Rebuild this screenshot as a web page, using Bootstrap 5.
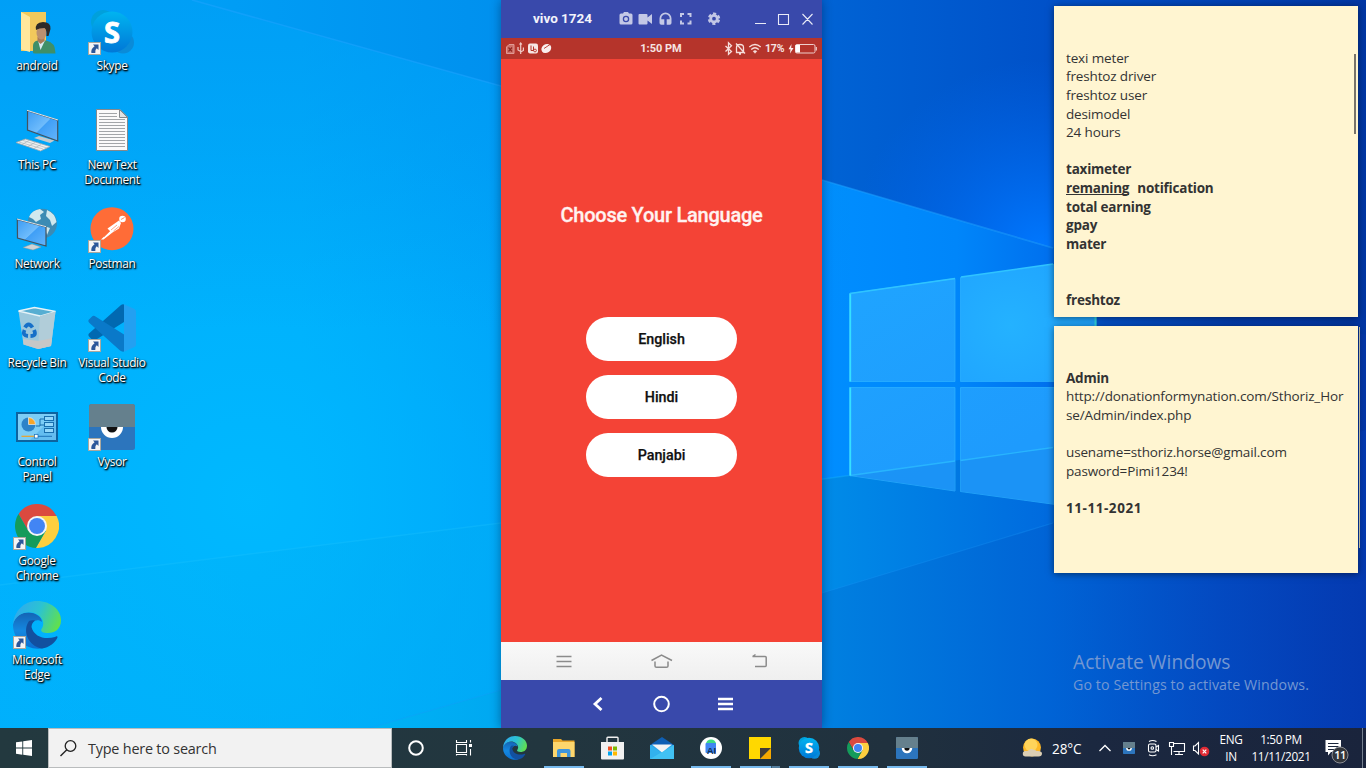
<!DOCTYPE html>
<html lang="en">
<head>
<meta charset="utf-8">
<meta name="viewport" content="width=device-width, initial-scale=1">
<title>Desktop</title>
<link href="https://cdn.jsdelivr.net/npm/bootstrap@5.3.0/dist/css/bootstrap.min.css" rel="stylesheet">
<style>
  body { font-family: "Open Sans", "Noto Sans", sans-serif; background: #0064d8; }
  svg { display: block; flex: none; }
  .wallpaper { inset: 0; z-index: 0; }
  .desk-col { width: 75px; }
  .desk-icon { height: 99px; width: 75px; }
  .desk-icon span { font-size: 11.9px; line-height: 15px; letter-spacing: -.3px; margin-left: -1px; color: #fff; text-align: center; white-space: nowrap;
    text-shadow: 1px 1px 2px #000, 0 1px 2px rgba(0,0,0,.8), 1px 1px 1px rgba(0,0,0,.7); }
  .phone { left: 501px; top: 0; width: 321px; height: 728px; z-index: 2; font-family: Roboto, sans-serif; box-shadow: 0 0 10px rgba(0,20,60,.45); }
  .phone-title { height: 38px; background: #3949ab; }
  .phone-name { width: 117px; padding-left: 32px; font-size: 13.5px; font-weight: 700; color: #f3f4fb; line-height: 37px; }
  .phone-status { height: 21px; background: #b5342b; color: #f7e4e2; font-size: 11px; font-weight: 700; line-height: 22px; }
  .clock-text { width: 42px; }
  .battery-text { width: 21px; font-size: 10.5px; letter-spacing: -.2px; }
  .phone-app { height: 583px; background: #f44336; padding-top: 140px; }
  .app-heading { font-size: 20px; font-weight: 500; line-height: 32px; letter-spacing: -.25px; margin-bottom: 85.500px; color: #fff2f0; -webkit-text-stroke: .3px #fff2f0; }
  .lang-list { gap: 14px; }
  .lang-btn { width: 151px; height: 44px; background: #fff; border-radius: 22px; color: #111; font-size: 14.3px; font-weight: 500; line-height: 44px; padding: 0; border: 0; -webkit-text-stroke: .25px #111; }
  .phone-keys { height: 38px; background: linear-gradient(#f9f9f9, #efefef); }
  .phone-nav { height: 48px; background: #3949ab; }
  .sticky { left: 1054px; width: 304px; background: #fff5d1; z-index: 2; color: #333; font-size: 13.5px; line-height: 18.6px; letter-spacing: -.14px; box-shadow: 0 1px 7px rgba(0,0,0,.5); white-space: pre; }
  .sticky b { letter-spacing: -.22px; }
  .sticky .note-date { letter-spacing: .55px; }
  .note-line { height: 18.6px; }
  .note-mark { height: 16.500px; border-bottom: 1px solid #333; }
  .sticky-a { top: 6px; height: 311px; padding: 42.800px 12px 0; }
  .sticky-b { top: 326px; height: 247px; padding: 42.600px 12px 0; }
  .sticky-scroll { right: 2px; top: 48px; width: 2px; height: 80px; background: #77736a; }
  .sticky-edge { right: -2px; top: 1px; width: 1px; height: 221px; background: #b9b69c; }
  .watermark { left: 1073px; top: 649px; color: #7397d2; z-index: 1; white-space: nowrap; }
  .watermark-title { font-size: 19.2px; line-height: 26px; }
  .watermark-sub { font-size: 14.2px; line-height: 20px; letter-spacing: .1px; }
  .taskbar { height: 40px; z-index: 3; background: linear-gradient(90deg, #23393f 0, #22363f 40%, #20313e 65%, #1b2840 80%, #1a243c 100%); color: #fff; }
  .start-cell { width: 48px; }
  .search-cell { width: 344px; background: #f2f2f2; border: 1px solid #b9bcbd; color: #333; font-size: 14.4px; letter-spacing: -.2px; padding-top: 1px; }
  .temp-text { width: 38px; font-size: 13.6px; line-height: 41px; letter-spacing: -.1px; }
  .tray-text { font-size: 11.8px; line-height: 17px; letter-spacing: -.34px; text-align: center; white-space: nowrap; padding-top: 3px; }
  .tray-lang { width: 34px; }
  .tray-clock { width: 66px; }
</style>
</head>
<body class="vh-100 overflow-hidden d-flex flex-column position-relative">

<svg width="0" height="0" class="position-absolute">
  <defs>
    <linearGradient id="gSky" x1="0" y1="0" x2="0" y2="1"><stop offset="0" stop-color="#00b4f0"/><stop offset="1" stop-color="#0078d7"/></linearGradient>
    <linearGradient id="gEdgeTop" x1="0" y1=".3" x2="1" y2=".6"><stop offset="0" stop-color="#2fa9f0"/><stop offset=".5" stop-color="#2bc3d2"/><stop offset="1" stop-color="#62e04c"/></linearGradient>
    <linearGradient id="gEdgeMid" x1="0" y1="0" x2="0" y2="1"><stop offset="0" stop-color="#1464b4"/><stop offset=".5" stop-color="#1488e0"/><stop offset="1" stop-color="#0c6fd0"/></linearGradient>
    <linearGradient id="gScreen" x1="0" y1="0" x2="1" y2="1"><stop offset="0" stop-color="#3a9bf4"/><stop offset=".5" stop-color="#6fbcfc"/><stop offset=".52" stop-color="#3f9ff6"/><stop offset="1" stop-color="#64b5fb"/></linearGradient>
    <symbol id="shortcut" viewBox="0 0 13 13">
      <rect x=".5" y=".5" width="12" height="12" fill="#f5f5f5" stroke="#aaa89f"/>
      <path d="M5 2.5h5.5V8L8.8 6.3Q6.5 8 7.3 11H3.4Q2.6 7 6.6 4.2Z" fill="#2b579a"/>
    </symbol>
    <symbol id="skype" viewBox="-24 -24 48 48">
      <circle cx="-9" cy="-10" r="12" fill="#00a0dc"/><circle cx="11" cy="10.500" r="11" fill="#0a8bd8"/>
      <circle r="20.5" fill="url(#gSky)"/>
      <text x="0" y="10.500" text-anchor="middle" font-family="Open Sans" font-weight="700" font-size="29" fill="#fff" stroke="#fff" stroke-width=".8">S</text>
    </symbol>
    <symbol id="chrome" viewBox="-22 -22 44 44">
      <path fill="#db4a3f" d="M-18.46-11.97A22 22 0 0 1 19.6-10L0-10-8.66 5Z"/>
      <path fill="#fdcf3f" d="M19.6-10A22 22 0 0 1-1.14 21.97L8.66 5 0-10Z"/>
      <path fill="#149b5b" d="M-1.14 21.97A22 22 0 0 1-18.46-11.97L-8.66 5 8.66 5Z"/>
      <circle r="10" fill="#f4f5f8"/><circle r="8" fill="#4285f4"/>
    </symbol>
    <symbol id="edge" viewBox="-24 -24 48 48">
      <path fill="url(#gEdgeMid)" d="M-24 0C-23-8-16-12.500-9-12.500-1-12.500 5-8 5-3 0-7-5-3-6 1-7 10 0 18 6 23.200-10 26-24 15-24 0Z"/>
      <path fill="#1250a0" d="M-8-4C-15 6-9 21 5 23.500 12 22.500 18 18 20.300 13 21 11 19.500 11 18 12 8 15-3 12-5.500 2-5.500-1-4-3-2-4.500-4-5-6-5-8-4Z"/>
      <path fill="url(#gEdgeTop)" d="M-23.800-1C-23-14-13-24 0-24 14-24 24-15 24-5 24 4 18 8 11 8 6 8 3 6.500 4.500 4 8-1 6-6 2-9.500-6-16-21-13-23.800-1Z"/>
    </symbol>
    <symbol id="vysor" viewBox="0 0 46 46">
      <rect width="46" height="46" rx="2.500" fill="#2c75bd"/>
      <path d="M0 23V2.500Q0 0 2.500 0h41Q46 0 46 2.500V23Z" fill="#65808d"/>
      <path d="M12 23a11 11 0 0 0 22 0Z" fill="#fff"/><path d="M17.500 23a5.500 5.500 0 0 0 11 0Z" fill="#111"/>
    </symbol>
  </defs>
</svg>

<!-- Wallpaper -->
<svg class="wallpaper position-absolute" width="1366" height="768" viewBox="0 0 1366 768">
  <defs>
    <linearGradient id="wBase" gradientUnits="userSpaceOnUse" x1="0" y1="0" x2="1366" y2="0">
      <stop offset="0" stop-color="#00aefd"/><stop offset=".22" stop-color="#00aefb"/><stop offset=".366" stop-color="#00a2f8"/>
      <stop offset=".6" stop-color="#008eff"/><stop offset=".7" stop-color="#0086fa"/><stop offset=".77" stop-color="#0070ee"/><stop offset=".81" stop-color="#0452cc"/><stop offset=".9" stop-color="#043eb2"/><stop offset="1" stop-color="#0436a8"/>
    </linearGradient>
    <radialGradient id="wCyan" gradientUnits="userSpaceOnUse" cx="250" cy="500" r="420"><stop offset="0" stop-color="#00baff" stop-opacity=".9"/><stop offset="1" stop-color="#00b4ff" stop-opacity="0"/></radialGradient>
    <linearGradient id="wTop" gradientUnits="userSpaceOnUse" x1="192" y1="0" x2="1366" y2="0">
      <stop offset="0" stop-color="#009ff6"/><stop offset=".27" stop-color="#0090ee"/><stop offset=".55" stop-color="#0062d4"/><stop offset=".74" stop-color="#0050c8"/><stop offset="1" stop-color="#0036a4"/>
    </linearGradient>
    <linearGradient id="wLeftTop" x1="0" y1="0" x2="0" y2="1"><stop offset="0" stop-color="#0090f0" stop-opacity=".5"/><stop offset="1" stop-color="#0090ee" stop-opacity="0"/></linearGradient>
    <radialGradient id="wGlow" gradientUnits="userSpaceOnUse" cx="1040" cy="250" r="190"><stop offset="0" stop-color="#0078ff"/><stop offset="1" stop-color="#0068f0" stop-opacity="0"/></radialGradient>
    <linearGradient id="wLow" gradientUnits="userSpaceOnUse" x1="0" y1="0" x2="1366" y2="0">
      <stop offset="0" stop-color="#00b4f6" stop-opacity=".15"/><stop offset=".36" stop-color="#00acf4" stop-opacity=".5"/><stop offset=".6" stop-color="#008ce8"/><stop offset=".77" stop-color="#006ade"/><stop offset=".9" stop-color="#0348c2" stop-opacity=".8"/><stop offset="1" stop-color="#0438b0" stop-opacity="0"/>
    </linearGradient>
    <linearGradient id="wFoot" gradientUnits="userSpaceOnUse" x1="380" y1="0" x2="1366" y2="0">
      <stop offset="0" stop-color="#00b2f4"/><stop offset=".12" stop-color="#00a8f0"/><stop offset=".45" stop-color="#007edf"/><stop offset=".68" stop-color="#0062d4"/><stop offset=".84" stop-color="#034bc2"/><stop offset="1" stop-color="#043ab2"/>
    </linearGradient>
    <radialGradient id="wPaneGlow" gradientUnits="userSpaceOnUse" cx="1010" cy="325" r="110"><stop offset="0" stop-color="#24b2ff"/><stop offset="1" stop-color="#1ea0ff"/></radialGradient>
    <linearGradient id="wPane" gradientUnits="userSpaceOnUse" x1="850" y1="290" x2="960" y2="480"><stop offset="0" stop-color="#1fa4ff"/><stop offset="1" stop-color="#1e9bfd"/></linearGradient>
  </defs>
  <rect width="1366" height="768" fill="url(#wBase)"/>
  <rect width="1366" height="768" fill="url(#wCyan)"/>
  <rect width="850" height="330" fill="url(#wLeftTop)"/>
  <path d="M192 0 501 86 822 180 1053 248 1366 335V0Z" fill="url(#wTop)"/>
  <path d="M822 0H1366V345L1053 248 822 180Z" fill="url(#wGlow)"/>
  <path d="M0 585 501 523 849 475.500 1366 403V768H0Z" fill="url(#wLow)"/>
  <path d="M370 728 501 690 865 580 1053 523 1366 430V768H370Z" fill="url(#wFoot)" opacity=".85"/>
  <path d="M192 0 501 86 822 180 1053 248" fill="none" stroke="#20a4ff" stroke-width="1.600" opacity=".5"/>
  <path d="M0 585 501 523 849 475.500" fill="none" stroke="#20c4ff" stroke-width="1.500" opacity=".28"/>
  <path d="M370 728 501 690 865 580 1053 523" fill="none" stroke="#1a98f8" stroke-width="1.300" opacity=".3"/>
  <path d="M849.500 293.500 955 278.500V381.500H849.500ZM849.500 387.500H955V491L849.500 475.500ZM960.500 387.500H1096V510L960.500 491.500Z" fill="url(#wPane)" stroke="#2fb4ff" stroke-opacity=".7"/>
  <path d="M960.500 277.500 1096 258.500V381.500H960.500Z" fill="url(#wPaneGlow)" stroke="#2fb4ff" stroke-opacity=".7"/>
  <path d="M850 475.500 955 461V491ZM960.500 460.500 1053 447.500 1096 442V510L960.500 491.500Z" fill="#1a90f2" opacity=".7"/>
  <path d="M850 475.500 955 461M960.500 460.500 1053 447.500" stroke="#2cbcff" stroke-width="1.300" fill="none" opacity=".8"/>
  <path d="M850.300 381.500V293.500M850.300 387.500V475.500" stroke="#35e0ff" stroke-width="1.700" fill="none"/>
  <path d="M850 293.500 955 278.500M961 277 1053 264" stroke="#2fc4ff" stroke-width="1.400" fill="none"/>
  <path d="M1095.500 317v10" stroke="#30d8e0" stroke-width="2"/>
</svg>

<!-- Desktop shortcuts -->
<main class="flex-grow-1 d-flex position-relative overflow-hidden">
  <div class="desk-col d-flex flex-column">
    <div class="desk-icon d-flex flex-column align-items-center">
      <svg width="75" height="58" viewBox="0 0 75 58">
        <path d="M21 12H46V51H21Z" fill="#f2c95c"/><path d="M21 12 30 17V52L21 49.500Z" fill="#ffe79c"/>
        <path d="M33 52.500V46Q33 41 38 40.500H46Q55.500 42 55.500 53.500H35Q33 53.500 33 52.500Z" fill="#3f8f68"/><path d="M38 40.500 40.500 50 45 40.500Z" fill="#d7eaf0"/>
        <path d="M37.500 37H44.500V41L40.500 44 37.500 41Z" fill="#a87a58"/><ellipse cx="41.500" cy="33" rx="5" ry="6.500" fill="#ba9070"/>
        <path d="M36 30Q34.500 22.500 43 22 51 22 50.500 29L48.500 36H46.500Q47 30 44.500 28 39 28 36 30Z" fill="#2e2a28"/>
      </svg><span>android</span></div>
    <div class="desk-icon d-flex flex-column align-items-center">
      <svg width="75" height="58" viewBox="0 99 75 58">
        <path d="M34 138 39 136 54.500 140.500 50 143Z" fill="#c5cacd"/>
        <path d="M27.500 110.800 57.700 120.300V141L27.500 130Z" fill="url(#gScreen)" stroke="#44525e" stroke-width="1.200"/>
        <path d="M27 110.300 58 120" stroke="#dfe6ea" stroke-width="1"/>
        <path d="M16 142.500 25.500 139 50 146.500 40.500 151Z" fill="#eef0f1" stroke="#a0a8ad" stroke-width=".8"/>
        <path d="M19 142 43 149M23 140.500 47 148M22 144.500 29 140.500M28 146.500 35 142.500M34 148.500 41 144.500" stroke="#a5adb2" stroke-width=".6"/>
      </svg><span>This PC</span></div>
    <div class="desk-icon d-flex flex-column align-items-center">
      <svg width="75" height="58" viewBox="0 198 75 58">
        <circle cx="42.300" cy="223.500" r="14.700" fill="#3c8bb4"/>
        <path d="M29 217Q32 210 40 209L44 212 40 215 41 219 36 222 33 219ZM47 210Q55 213 56.500 222L52 226 50 220 46 216ZM44 226 50 228 47 235Z" fill="#cfe8ee"/>
        <path d="M23 247.500 32 244 41 247 33 250Z" fill="#cdd3d6" stroke="#8c969b" stroke-width=".5"/>
        <path d="M17.300 219.300 46 227V246L17.500 238Z" fill="url(#gScreen)" stroke="#44525e" stroke-width="1.200"/><path d="M17 219 46 226.700" stroke="#dfe6ea"/>
      </svg><span>Network</span></div>
    <div class="desk-icon d-flex flex-column align-items-center">
      <svg width="75" height="58" viewBox="0 297 75 58">
        <path d="M18.500 311 34.500 307.500 55.500 311.500 51 346 38 349 23.500 344.500Z" fill="#9cc8dc"/>
        <path d="M18.500 311 34.500 307.500 55.500 311.500 40 316Z" fill="#57aed2" stroke="#e5f3f8" stroke-width="1.300"/>
        <path d="M40 316 55.500 311.500 51 346 38 349Z" fill="#b1cdd9"/><path d="M23 339 39 341 52 338 51 346 38 349 23.500 344.500Z" fill="#c6c7c7"/>
        <g fill="none" stroke="#1670c8" stroke-width="3.800"><path d="M25 327.500Q28.500 321.500 32.500 327.500"/><path d="M34 330Q37 336 30.500 336"/><path d="M28 336Q22 335.500 24.500 330"/></g>
      </svg><span>Recycle Bin</span></div>
    <div class="desk-icon d-flex flex-column align-items-center">
      <svg width="75" height="58" viewBox="0 396 75 58">
        <rect x="17" y="413" width="40" height="28" fill="#7ccdf6" stroke="#0d639f" stroke-width="2"/><path d="M56 414V440H30Z" fill="#63bdf0"/>
        <circle cx="28.500" cy="424.500" r="7" fill="#2c83c8"/><path d="M28.500 417.500A7 7 0 0 1 35.500 424.500H28.500Z" fill="#f7a62a" stroke="#fff" stroke-width=".6"/>
        <path d="M36 426H40V419H44M40 425H44" stroke="#196fae" fill="none"/>
        <g fill="#93d8fb" stroke="#196fae"><rect x="44.500" y="416.500" width="9" height="4"/><rect x="44.500" y="422.500" width="9" height="4"/><rect x="44.500" y="428.500" width="9" height="4"/></g>
        <path d="M21.500 436.300H36" stroke="#eda128" stroke-width="1.200"/><path d="M36 436.300H52" stroke="#1d73ba"/><rect x="34.500" y="434.500" width="3.500" height="3.500" fill="#fff" stroke="#1d73ba" stroke-width=".7"/>
      </svg><span>Control<br>Panel</span></div>
    <div class="desk-icon d-flex flex-column align-items-center">
      <svg width="75" height="58" viewBox="0 495 75 58"><use href="#chrome" x="15" y="504" width="44" height="44"/><use href="#shortcut" x="13" y="537" width="13" height="13"/></svg><span>Google<br>Chrome</span></div>
    <div class="desk-icon d-flex flex-column align-items-center">
      <svg width="75" height="58" viewBox="0 594 75 58"><use href="#edge" x="13" y="601" width="48" height="48"/><use href="#shortcut" x="13" y="636" width="13" height="13"/></svg><span>Microsoft<br>Edge</span></div>
  </div>
  <div class="desk-col d-flex flex-column">
    <div class="desk-icon d-flex flex-column align-items-center">
      <svg width="75" height="58" viewBox="75 0 75 58"><use href="#skype" x="88" y="8" width="48" height="48"/><use href="#shortcut" x="88" y="42" width="13" height="13"/></svg><span>Skype</span></div>
    <div class="desk-icon d-flex flex-column align-items-center">
      <svg width="75" height="58" viewBox="75 99 75 58">
        <path d="M96.500 109.500H120L127.500 117V150.500H96.500Z" fill="#fafafa" stroke="#85898c"/>
        <path d="M119.500 109.500V117.500H127.500Z" fill="#e2e2e2" stroke="#85898c"/>
        <path d="M99 113.500h18M99 116.500h18M99 119.500h26M99 122.500h26M99 125.500h26M99 128.500h26M99 131.500h26M99 134.500h26M99 137.500h26M99 140.500h26M99 143.500h26M99 146.500h26" stroke="#a2a5a8"/>
      </svg><span>New Text<br>Document</span></div>
    <div class="desk-icon d-flex flex-column align-items-center">
      <svg width="75" height="58" viewBox="75 198 75 58">
        <circle cx="112" cy="228.700" r="21.500" fill="#ff6c37"/>
        <circle cx="122.500" cy="219" r="3.300" fill="#fff"/><path d="M121 219.500 124.500 217.500" stroke="#ff6c37" stroke-width=".8"/>
        <path d="M119 220.500 107.500 228.500 110 231 101 239.500 103.500 239.500 112.500 232.500 119 228.500 121 223Z" fill="#fff"/><path d="M117 225 111 230M119 226.500 113.500 231M110 231 104 237" stroke="#ff6c37" stroke-width=".6"/>
        <use href="#shortcut" x="88" y="240" width="13" height="13"/>
      </svg><span>Postman</span></div>
    <div class="desk-icon d-flex flex-column align-items-center">
      <svg width="75" height="58" viewBox="75 297 75 58">
        <path d="M124 304.500V322L95.500 340Q93.500 341 91.500 339L89 336.500Q87.500 334.500 89.500 333L121 305Q122.500 304 124 304.500Z" fill="#0169b1"/>
        <path d="M124 351.500V334.500L95.500 316.500Q93.500 315 91.500 317L89 319.500Q87.500 321 89.500 323L120 350.500Q122 352 124 351.500Z" fill="#0a79c9"/>
        <path d="M124 304.300 134.500 309Q136 310 136 311.500V344.500Q136 346 134.500 347L124 351.800Z" fill="#23a0f1"/>
        <use href="#shortcut" x="88" y="339" width="13" height="13"/>
      </svg><span>Visual Studio<br>Code</span></div>
    <div class="desk-icon d-flex flex-column align-items-center">
      <svg width="75" height="58" viewBox="75 396 75 58"><use href="#vysor" x="89" y="404" width="46" height="46"/><use href="#shortcut" x="88" y="438" width="13" height="13"/></svg><span>Vysor</span></div>
  </div>

  <!-- Phone mirror window -->
  <section class="phone position-absolute d-flex flex-column">
    <header class="phone-title d-flex">
      <div class="phone-name text-nowrap">vivo 1724</div>
      <svg width="204" height="38" viewBox="618 0 204 38">
        <g fill="#c3c8e6">
          <path d="M621 13.500h2l1-1.500h4l1 1.500h2q1.500 0 1.500 1.500v8q0 1.500-1.500 1.500H621q-1.500 0-1.500-1.500v-8q0-1.500 1.500-1.500Z"/>
          <path d="M639.500 14h7q1 0 1 1v2.500l4.500-3.500v10l-4.500-3.500V23.500q0 1-1 1h-7q-1 0-1-1V15q0-1 1-1Z"/>
          <path d="M659.500 23v-4.500a6 6 0 0 1 12 0V23q0 1.800-1.800 1.800h-3v-5.500h3v-.8a4.200 4.200 0 0 0-8.400 0v.8h3v5.500h-3q-1.800 0-1.800-1.800Z"/>
          <path d="M680 13h4v2h-2v2h-2ZM687.500 13h4v4h-2v-2h-2ZM680 20.500h2v2h2v2h-4ZM689.500 20.500h2v4h-4v-2h2Z"/>
        </g>
        <circle cx="626" cy="19" r="2.600" fill="none" stroke="#3949ab" stroke-width="1.300"/>
        <circle cx="714" cy="18.700" r="3.300" fill="none" stroke="#c3c8e6" stroke-width="2.800"/>
        <circle cx="714" cy="18.700" r="5.200" fill="none" stroke="#c3c8e6" stroke-width="2" stroke-dasharray="3.200 2.245" stroke-dashoffset="-1.100"/>
        <path d="M755 23.500h11M778.500 14.500h10v10h-10ZM802.500 14 812.500 24.500M812.500 14 802.500 24.500" fill="none" stroke="#e9ebf7" stroke-width="1.100"/>
      </svg>
    </header>
    <div class="phone-status d-flex">
      <svg width="139" height="21" viewBox="501 38 139 21">
        <path d="M509 44.500h5v9h-7.500v-6.500Z" fill="#cf7069" stroke="#e09a94"/><path d="M508.500 47.500l3.500 4M512 47.500l-3.500 4" stroke="#8f2620" stroke-width="1.200"/>
        <path d="M520.700 43v11M520.700 51.500l-2.700-1.500v-3M520.700 52l2.700-1.500v-3M519.500 44.500l1.200-1.500 1.200 1.500" stroke="#efcac6" fill="none" stroke-width="1.200"/>
        <rect x="528" y="43.500" width="10" height="10" rx="2" fill="#f6e6e4"/><path d="M531 45.500v5M531 50.500h2.500v-4" stroke="#b5342b" fill="none"/><circle cx="535" cy="50.500" r="1.400" stroke="#b5342b" fill="none" stroke-width=".9"/>
        <ellipse cx="546.300" cy="48.500" rx="5.200" ry="4.300" transform="rotate(-35 546.300 48.500)" fill="#f9efee"/><path d="M544 48.500 550 44.500" stroke="#b5342b" stroke-width=".9"/>
      </svg>
      <div class="clock-text text-nowrap text-center">1:50 PM</div>
      <svg width="83" height="21" viewBox="682 38 83 21">
        <g fill="none" stroke="#f6dedb" stroke-width="1.300">
          <path d="M725.500 46l6 5.500-3 2.800v-11.500l3 3-6 5.700"/><path d="M736.500 52.500v-5q0-3 3.500-3t3.500 3v5ZM736 43.500l9 10M739 54h2"/>
          <path d="M749.300 47q5.700-5 11.400 0M751.200 49.500q3.800-3.400 7.600 0"/><path d="M753.200 51.300q1.800-1.500 3.600 0L755 53.300Z" fill="#f6dedb" stroke-width=".6"/>
        </g>
      </svg>
      <div class="battery-text text-nowrap">17%</div>
      <svg width="36" height="21" viewBox="786 38 36 21">
        <path d="M791.500 44 788.500 49.300H790.500L790 53.500 793.500 48H791.200Z" fill="#fbeeed"/>
        <rect x="795.500" y="44.500" width="19.500" height="8.500" rx="1.500" fill="none" stroke="#eecfcc"/><rect x="795.500" y="45" width="4.500" height="7.500" fill="#fff"/><path d="M816.300 47v3.500" stroke="#eecfcc" stroke-width="1.200"/>
      </svg>
    </div>
    <div class="phone-app text-center d-flex flex-column align-items-center">
      <h1 class="app-heading">Choose Your Language</h1>
      <div class="lang-list d-grid">
        <button class="lang-btn">English</button>
        <button class="lang-btn">Hindi</button>
        <button class="lang-btn">Panjabi</button>
      </div>
    </div>
    <div class="phone-keys">
      <svg width="321" height="38" viewBox="501 642 321 38" fill="none" stroke="#8b8b8b" stroke-width="1.500">
        <path d="M556.500 656.500h15M556.500 661.500h15M556.500 666.500h15"/>
        <path d="M651.500 660.500 661.500 655 672 660.500M655 661.500V666q0 1.300 1.500 1.300H666.500q1.500 0 1.500-1.300V661.500"/>
        <path d="M752.500 656.500H765.200q1 0 1 1V665.500q0 1-1 1H755M755.500 654.500 752.500 656.500"/>
      </svg>
    </div>
    <div class="phone-nav">
      <svg width="321" height="48" viewBox="501 680 321 48" fill="none" stroke="#fff">
        <path d="M601.500 698 595 704 601.500 710" stroke-width="2.800"/><circle cx="661.500" cy="704" r="7.300" stroke-width="2"/><path d="M718 699h15M718 704h15M718 709h15" stroke-width="2.600"/>
      </svg>
    </div>
  </section>

  <!-- Sticky notes -->
  <article class="sticky sticky-a position-absolute">texi meter
freshtoz driver
freshtoz user
desimodel
24 hours

<b>taximeter
<span class="note-line d-flex"><span class="note-mark">remaning</span><span class="ms-2">notification</span></span>total earning
gpay
mater


freshtoz</b><i class="sticky-scroll position-absolute"></i></article>
  <article class="sticky sticky-b position-absolute"><b>Admin</b>
http://donationformynation.com/Sthoriz_Hor
se/Admin/index.php

usename=sthoriz.horse@gmail.com
pasword=Pimi1234!

<b class="note-date">11-11-2021</b><i class="sticky-edge position-absolute"></i></article>

  <div class="watermark position-absolute">
    <div class="watermark-title">Activate Windows</div>
    <div class="watermark-sub">Go to Settings to activate Windows.</div>
  </div>
</main>

<!-- Taskbar -->
<footer class="taskbar d-flex flex-shrink-0 position-relative">
  <svg class="start-cell" height="40" viewBox="0 728 48 40"><path d="M16 742.300 22.300 741.400V747.600H16ZM23.200 741.300 32 740V747.600H23.200ZM16 748.500H22.300V754.700L16 753.800ZM23.200 748.500H32V756L23.200 754.800Z" fill="#fff"/></svg>
  <div class="search-cell d-flex align-items-center">
    <svg width="39" height="38" viewBox="49 729 39 38"><circle cx="70.500" cy="745" r="5.300" fill="none" stroke="#222" stroke-width="1.300"/><path d="M66.800 748.800 60.500 755" stroke="#222" stroke-width="1.400"/></svg>
    <span>Type here to search</span>
  </div>
  <svg width="98" height="40" viewBox="392 728 98 40">
    <circle cx="416" cy="748" r="6.800" fill="none" stroke="#fff" stroke-width="2"/>
    <path d="M456.500 744.500h10v8h-10ZM456.500 740v2.500h10V740M456.500 755.500v-1h10v1M470.500 740v2.500M470.500 749v6.500" fill="none" stroke="#fff" stroke-width="1.100"/><rect x="469" y="744" width="3" height="3" fill="#fff"/>
  </svg>
  <svg width="49" height="40" viewBox="490 728 49 40"><use href="#edge" x="503" y="736" width="24" height="24"/></svg>
  <svg width="49" height="40" viewBox="539 728 49 40">
    <path d="M553 739h8l1.500 1.500H574.500V757H553Z" fill="#e8a62a"/><path d="M553 742H574.500V757H553Z" fill="#fdd66d"/><path d="M557 757V751q0-2 2-2h9.500q2 0 2 2v6H567V753H560.500v4Z" fill="#3e95dc"/><path d="M544 766h40v2h-40Z" fill="#76b9ed"/></svg>
  <svg width="49" height="40" viewBox="588 728 49 40">
    <path d="M607 742v-4q0-.8.8-.8h9.400q.8 0 .8.8v4" fill="none" stroke="#f0f0f0" stroke-width="1.400"/><path d="M601 742h23v16.500q0 1-1 1H602q-1 0-1-1Z" fill="#f1f1f1"/>
    <path d="M608 746.500h4v4h-4Z" fill="#f25022"/><path d="M613 746.500h4v4h-4Z" fill="#7fba00"/><path d="M608 751.500h4v4h-4Z" fill="#00a4ef"/><path d="M613 751.500h4v4h-4Z" fill="#ffb900"/></svg>
  <svg width="49" height="40" viewBox="637 728 49 40">
    <path d="M650 745 662 737 674 745Z" fill="#0f5fb4"/><path d="M650 745h24v14H650Z" fill="#2ea5e8"/><path d="M652 744.500H672L662 752.500Z" fill="#f4f4f4"/><path d="M650 745 662 753 674 745V759H650Z" fill="#32b1ee"/><path d="M674 745 650 759H674Z" fill="#50d2f8" opacity=".5"/></svg>
  <svg width="49" height="40" viewBox="686 728 49 40">
    <circle cx="711" cy="748" r="11" fill="#fff"/><path d="M706 744a5 4.500 0 0 1 10 0Z" fill="#3ddc84"/><rect x="705.500" y="743" width="10.500" height="10" rx="1" fill="#3f86f2"/>
    <text x="711.500" y="753.500" font-family="Liberation Sans" font-size="9.500" font-weight="700" text-anchor="middle" fill="#123052">AI</text><path d="M691 766h40v2h-40Z" fill="#76b9ed"/></svg>
  <svg width="49" height="40" viewBox="735 728 49 40">
    <path d="M749 737h22v22H749Z" fill="#ffd800"/><path d="M771 748V759H760Z" fill="#f5a800"/><path d="M760 748h11L760 759Z" fill="#403c38"/><path d="M740 766h31v2h-31Z" fill="#76b9ed"/><path d="M771.500 766h8.500v2h-8.500Z" fill="#547f9f"/></svg>
  <svg width="49" height="40" viewBox="784 728 49 40"><use href="#skype" x="797" y="736" width="24" height="24"/><path d="M789 766h40v2h-40Z" fill="#76b9ed"/></svg>
  <svg width="49" height="40" viewBox="833 728 49 40"><use href="#chrome" x="847" y="737" width="22" height="22"/><path d="M838 766h40v2h-40Z" fill="#76b9ed"/></svg>
  <svg width="49" height="40" viewBox="882 728 49 40"><use href="#vysor" x="896" y="737" width="22" height="22"/><path d="M887 766h40v2h-40Z" fill="#76b9ed"/></svg>

  <div class="d-flex ms-auto">
    <svg width="33" height="40" viewBox="1019 728 33 40"><circle cx="1032" cy="747.500" r="9" fill="#fdb827"/><circle cx="1031" cy="745" r="6.500" fill="#ffd45a"/><path d="M1025.500 756.500a2.700 2.700 0 0 1 0-5.400q2 0 3-.6 3-2.500 5.500-.5 2 0 2.500 1 5.500-.5 5.500 2.500 0 3-3.500 3Z" fill="#dccfb4"/></svg>
    <div class="temp-text">28°C</div>
    <svg width="124" height="40" viewBox="1090 728 124 40">
      <path d="M1099.500 751 1105 745.500 1110.500 751" fill="none" stroke="#fff" stroke-width="1.300"/>
      <use href="#vysor" x="1123" y="742" width="12" height="12"/>
      <g fill="none" stroke="#fff" stroke-width="1.100"><rect x="1148.500" y="744" width="7.500" height="8" rx="1.500"/><circle cx="1152.300" cy="748" r="1.300"/><path d="M1156 747 1158.500 745.500v5.500l-2.500-1.500M1149 741.500q3.500-2 7.500 0M1149 754.800q3.500 2 7.500 0"/>
      <path d="M1173.500 743.500h11v8h-11M1179 751.500v3M1175 754.500h8M1169.500 742.500h4v4h-4ZM1171.500 746.500v8.500"/><path d="M1198.500 742.500V754L1195 750.500H1193.500V746H1195Z"/></g>
      <circle cx="1204.500" cy="751.500" r="4.800" fill="#e02b34"/><path d="M1202.700 749.700l3.600 3.600M1206.300 749.700l-3.600 3.600" stroke="#fff" stroke-width="1.200"/>
    </svg>
    <div class="tray-text tray-lang">ENG<br>IN</div>
    <div class="tray-text tray-clock">1:50 PM<br>11/11/2021</div>
    <svg width="52" height="40" viewBox="1314 728 52 40">
      <path d="M1325.500 740h15.500v12H1331l-3 3.500V752h-2.500Z" fill="#fff"/><path d="M1328 743.500h10.500M1328 746.500h10.500M1328 749.500h7" stroke="#1b263c"/>
      <circle cx="1340" cy="755" r="8" fill="#33363b" stroke="#8a8d93"/><text x="1340" y="759" text-anchor="middle" font-family="Open Sans" font-weight="600" font-size="11" letter-spacing="-.5" fill="#fff">11</text>
      <path d="M1362.500 728v40" stroke="#75808f"/></svg>
  </div>
</footer>
<script src="https://cdn.jsdelivr.net/npm/bootstrap@5.3.0/dist/js/bootstrap.bundle.min.js"></script>
</body>
</html>
